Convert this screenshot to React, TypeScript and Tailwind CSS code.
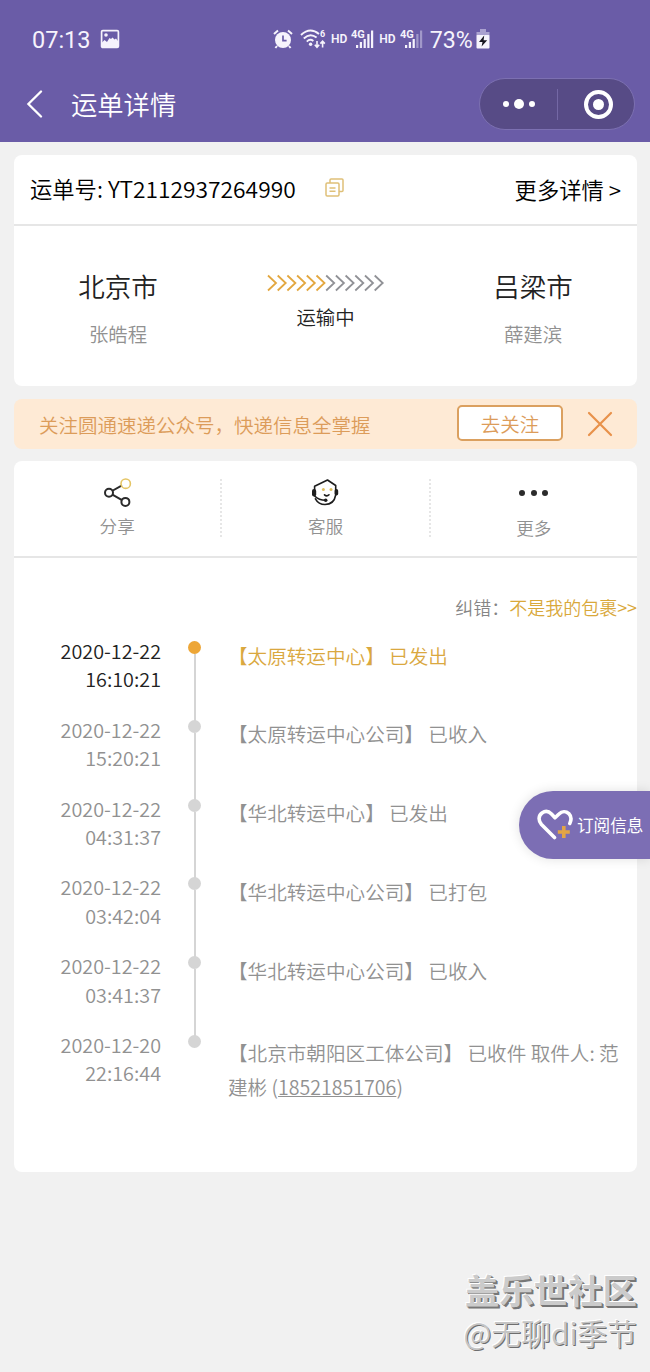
import clsx from "clsx";

const EVENTS = [
  { date: "2020-12-22", time: "16:10:21", text: "【太原转运中心】 已发出" },
  { date: "2020-12-22", time: "15:20:21", text: "【太原转运中心公司】 已收入" },
  { date: "2020-12-22", time: "04:31:37", text: "【华北转运中心】 已发出" },
  { date: "2020-12-22", time: "03:42:04", text: "【华北转运中心公司】 已打包" },
  { date: "2020-12-22", time: "03:41:37", text: "【华北转运中心公司】 已收入" },
  {
    date: "2020-12-20",
    time: "22:16:44",
    text: "【北京市朝阳区工体公司】 已收件 取件人: 范建彬 (",
    phone: "18521851706",
  },
];

const ARROWS = [0, 1, 2, 3, 4, 5, 6, 7, 8, 9, 10, 11];

function PictureIcon() {
  return (
    <svg width="20" height="20" viewBox="0 0 20 20" className="ml-[9px]">
      <rect x="1.6" y="1.6" width="16.8" height="16.8" rx="1.2" fill="none" stroke="#f6f3fc" strokeWidth="1.7" />
      <circle cx="6" cy="6" r="1.8" fill="#f6f3fc" />
      <path d="M2 13.5 L4.5 11 L7 13 L9.5 9 L11 10 L12.5 8.5 L14.5 10.5 L16 9.5 L18 12 V18 H2 Z" fill="#f6f3fc" />
    </svg>
  );
}

function AlarmIcon() {
  return (
    <svg width="20" height="20" viewBox="0 0 20 20">
      <path d="M1 5 L5 1.4 M19 5 L15 1.4 M4 17 L2.4 19 M16 17 L17.6 19" stroke="#f6f3fc" strokeWidth="2" />
      <circle cx="10" cy="11" r="8" fill="#f6f3fc" />
      <path d="M10 6.5 V11.6 H13.6" fill="none" stroke="#6a5ca7" strokeWidth="1.7" />
    </svg>
  );
}

function WifiIcon() {
  return (
    <svg width="26" height="20" viewBox="0 0 26 20" className="ml-[7px]">
      <g fill="none" stroke="#f6f3fc" strokeWidth="1.9">
        <path d="M1 6 Q10 -2.5 19 5" />
        <path d="M3.8 9.5 Q10 3.5 16.6 8.6" />
        <path d="M6.8 12.6 Q10 9.4 13.4 12" />
      </g>
      <circle cx="10.6" cy="15.2" r="1.7" fill="#f6f3fc" />
      <path d="M17 12 V18 M14.8 15.8 L17 18.2 L19.2 15.8 M22.6 18.5 V12.5 M20.4 14.6 L22.6 12.2 L24.8 14.6" fill="none" stroke="#f6f3fc" strokeWidth="1.6" />
      <text x="20" y="7.8" fontSize="9" fontWeight="700" fontFamily="Roboto" fill="#f6f3fc">6</text>
    </svg>
  );
}

function Signal({ weak }: { weak?: boolean }) {
  return (
    <svg width="23" height="20" viewBox="0 0 23 20" className="ml-[4px]">
      <g fill="#f6f3fc">
        <rect x="5" y="16" width="2.2" height="3" />
        <rect x="8.8" y="13" width="2.2" height="6" />
        <rect x="12.6" y="10" width="2.2" height="9" />
        <rect x="16.3" y="5" width="2.2" height="14" opacity={weak ? 0.4 : 1} />
        <rect x="20" y="1.5" width="2.2" height="17.5" opacity={weak ? 0.4 : 1} />
      </g>
      <text x="0" y="8.8" fontSize="11" fontWeight="700" fontFamily="Roboto" fill="#f6f3fc" stroke="#6a5ca7" strokeWidth="1.4" paintOrder="stroke">4G</text>
    </svg>
  );
}

function BatteryIcon() {
  return (
    <svg width="14" height="20" viewBox="0 0 14 20" className="ml-[3px]">
      <path d="M4 0 H10 V3 H13.5 V7 H0.5 V3 H4 Z" fill="#aaa1d0" />
      <rect x="0.5" y="6" width="13" height="13.5" rx="1" fill="#f6f3fc" />
      <path d="M8.2 6.6 L3 13 H6.5 L5.6 17.6 L11.2 11.2 H7.6 Z" fill="#17151f" />
    </svg>
  );
}

function StatusBar() {
  return (
    <div className="flex h-[78px] items-center pl-[32px] font-['Roboto'] text-[#f6f3fc]">
      <span className="w-[59px] pt-[2px] text-[23.5px] leading-7">07:13</span>
      <PictureIcon />
      <div className="ml-[153px] flex items-center">
        <AlarmIcon />
        <WifiIcon />
        <span className="ml-[5px] text-[12px] font-semibold">HD</span>
        <Signal />
        <span className="ml-[5px] text-[12px] font-semibold">HD</span>
        <Signal weak />
        <span className="ml-[7px] pt-[2px] text-[23.2px] leading-7">73%</span>
        <BatteryIcon />
      </div>
    </div>
  );
}

function NavBar() {
  return (
    <div className="flex h-[52px] items-center pr-[15px] pl-[26px]">
      <svg width="17" height="28" viewBox="0 0 17 28">
        <path d="M15 1.5 L2.4 14 L15 26.5" fill="none" stroke="#fff" strokeWidth="2.3" strokeLinecap="round" />
      </svg>
      <h1 className="ml-[28px] text-[26.3px] leading-9 font-[350] text-white">运单详情</h1>
      <div className="ml-auto flex h-[52px] w-[156px] items-center rounded-full border border-[#7c70b1] bg-[#574b86]">
        <div className="flex w-[77px] items-center justify-center gap-[5px]">
          <i className="size-[6px] rounded-full bg-white" />
          <i className="size-[10px] rounded-full bg-white" />
          <i className="size-[6px] rounded-full bg-white" />
        </div>
        <div className="h-[31px] w-px bg-[#7468a5]" />
        <div className="flex flex-1 justify-center pl-[4px]">
          <div className="flex size-[29px] items-center justify-center rounded-full border-4 border-white">
            <i className="size-[11px] rounded-full bg-white" />
          </div>
        </div>
      </div>
    </div>
  );
}

function Place({ city, person }: { city: string; person: string }) {
  return (
    <div className="flex w-[208px] flex-col items-center pt-[41px]">
      <span className="text-[26.5px] leading-10 font-[350] text-[#222]">{city}</span>
      <span className="mt-[14px] text-[19.4px] leading-7 font-[350] text-[#919191]">{person}</span>
    </div>
  );
}

function WaybillCard() {
  return (
    <section className="h-[231px] rounded-lg bg-white">
      <div className="flex h-[71px] items-center border-b-2 border-[#e6e6e6] px-[16px] text-[22.3px] font-[350] text-black">
        <span>
          运单号: <span className="text-[22.8px]">YT2112937264990</span>
        </span>
        <svg width="19" height="19" viewBox="0 0 19 19" className="mb-[4px] ml-[29px]">
          <g fill="none" stroke="#dfc078" strokeWidth="1.5">
            <path d="M5 5 V2 Q5 1 6 1 H17 Q18 1 18 2 V12.5 Q18 13.5 17 13.5 H14" />
            <rect x="1" y="5" width="13" height="13" rx="1.2" />
            <path d="M4.5 10 H10.5 M4.5 13.3 H10.5" />
          </g>
        </svg>
        <span className="ml-auto">更多详情 &gt;</span>
      </div>
      <div className="-mt-px flex justify-between">
        <Place city="北京市" person="张皓程" />
        <div className="flex flex-col items-center pt-[49px]">
          <svg width="118" height="18" viewBox="0 0 118 18">
            {ARROWS.map((n) => (
              <path
                key={n}
                d="M1 1.5 L9 9 L1 16.5"
                transform={`translate(${n * 9.7} 0)`}
                fill="none"
                stroke={n < 6 ? "#e3a73f" : "#909196"}
                strokeWidth="1.8"
              />
            ))}
          </svg>
          <span className="mt-[11px] text-[19.4px] leading-7 font-[350] text-[#222]">运输中</span>
        </div>
        <Place city="吕梁市" person="薛建滨" />
      </div>
    </section>
  );
}

function FollowBanner() {
  return (
    <section className="mt-[13px] flex h-[50px] items-center rounded-lg bg-[#feead5] pl-[25px] text-[19.5px] font-[350] text-[#dc9c5a]">
      <span className="w-[418px] pt-px">关注圆通速递公众号，快递信息全掌握</span>
      <button type="button" className="mb-[3px] h-[36px] w-[106px] rounded-[5px] border-2 border-[#dba05f] bg-white pt-[2px] leading-none">
        去关注
      </button>
      <svg width="26" height="26" viewBox="0 0 26 26" className="ml-[24px]">
        <path d="M2 2 L24 24 M24 2 L2 24" stroke="#e8914a" strokeWidth="2.2" strokeLinecap="round" />
      </svg>
    </section>
  );
}

function ActionBar() {
  return (
    <div className="flex h-[97px] items-center border-b-2 border-[#e6e6e6] text-[17.6px] leading-6 font-[350] text-[#919191]">
      <div className="flex flex-1 flex-col items-center gap-[7px] pb-[3px]">
        <svg width="30" height="30" viewBox="0 0 30 30" className="ml-px">
          <g fill="none" strokeWidth="2">
            <path d="M9 14 L19 8.3 M9 17.4 L19 23.2" stroke="#2b2b2b" />
            <circle cx="6" cy="15.7" r="4" stroke="#2b2b2b" />
            <circle cx="22.4" cy="24.9" r="4" stroke="#2b2b2b" />
            <circle cx="22.7" cy="6.7" r="4.7" stroke="#e5c565" strokeWidth="1.6" />
          </g>
        </svg>
        <span>分享</span>
      </div>
      <div className="mb-[2px] h-[58px] border-l-2 border-dotted border-[#e6e6e6]" />
      <div className="flex flex-1 flex-col items-center gap-[7px] pb-[3px]">
        <svg width="30" height="30" viewBox="0 0 30 30">
          <g fill="none" stroke="#1d1d1d" strokeWidth="1.6" strokeLinecap="round" strokeLinejoin="round">
            <path d="M4.6 12.5 V9.3 L17.5 3 L25.7 8.5 V18 Q24 27.5 15 27.5 Q8.5 27.5 5.4 21.8" />
            <path d="M4.6 19 Q9 23.3 15.5 23.3" />
            <path d="M14.5 17.8 Q16.8 20 19 17.8" />
          </g>
          <rect x="2" y="12" width="4.2" height="7.5" rx="2" fill="#1d1d1d" />
          <rect x="24.6" y="12" width="3.6" height="6.5" rx="1.8" fill="#1d1d1d" />
          <circle cx="15.7" cy="23.2" r="1.8" fill="#1d1d1d" />
          <circle cx="13.4" cy="12.5" r="1.5" fill="#dfbf5f" />
          <circle cx="21" cy="12.5" r="1.5" fill="#dfbf5f" />
        </svg>
        <span>客服</span>
      </div>
      <div className="mb-[2px] h-[58px] border-l-2 border-dotted border-[#e6e6e6]" />
      <div className="flex flex-1 flex-col items-center gap-[10px] pt-[2px]">
        <div className="flex h-[26px] items-center gap-[5.5px]">
          <i className="size-[6px] rounded-full bg-[#2b2b2b]" />
          <i className="size-[6px] rounded-full bg-[#2b2b2b]" />
          <i className="size-[6px] rounded-full bg-[#2b2b2b]" />
        </div>
        <span>更多</span>
      </div>
    </div>
  );
}

function Timeline() {
  return (
    <ul className="mt-[17px]">
      {EVENTS.map((event, index) => {
        const first = index === 0;
        const last = index === EVENTS.length - 1;
        return (
          <li key={event.time} className="flex h-[78.8px] text-[19.6px] font-[350]">
            <div className={clsx("-mt-px w-[147px] text-right text-[19.8px] leading-[28.4px]", first ? "text-[#222]" : "text-[#919191]")}>
              <div>{event.date}</div>
              <div>{event.time}</div>
            </div>
            <div className="ml-[27px] flex w-[13px] flex-col items-center pt-[3px]">
              <i className={clsx("size-[13px] shrink-0 rounded-full", first ? "bg-[#eda637]" : "bg-[#d5d5d5]")} />
              {!last && <div className="-mb-[4px] w-[2px] flex-1 bg-[#d5d5d5]" />}
            </div>
            <p
              className={clsx(
                "ml-[27px] w-[397px] leading-[34px]",
                first ? "text-[#daa83f]" : "text-[#919191]",
                last ? "pt-[4px]" : "pt-[0.5px]"
              )}
            >
              {event.text}
              {event.phone && (
                <>
                  <span className="underline">{event.phone}</span>)
                </>
              )}
            </p>
          </li>
        );
      })}
    </ul>
  );
}

function SubscribeButton() {
  return (
    <button
      type="button"
      className="absolute top-[791px] right-0 flex h-[68px] w-[131px] items-center rounded-l-full bg-[#7c6eb4] pl-[18px] text-white shadow-[0_0_12px_rgba(0,0,0,0.12)]"
    >
      <svg width="37" height="32" viewBox="0 0 37 32">
        <path
          d="M17.5 28.5 L4.5 15.5 C1 11.5 1.5 6.5 5 4 C8.5 1.5 12 2.5 14.5 5 L18 8.8 L22 5 C25 2 29 2 31.8 4.6 C34.6 7.5 34.5 11 32.8 14.5"
          fill="none"
          stroke="#fff"
          strokeWidth="3.6"
          strokeLinecap="round"
          strokeLinejoin="round"
        />
        <path d="M26.8 17 V29 M20.8 23 H32.8" stroke="#e3a545" strokeWidth="3.6" />
      </svg>
      <span className="ml-[3px] text-[16.6px] whitespace-nowrap">订阅信息</span>
    </button>
  );
}

export default function App() {
  return (
    <div className="relative h-[1372px] w-[650px] overflow-hidden bg-[#f1f1f1] font-['Noto_Sans_CJK_SC',sans-serif]">
      <header className="h-[142px] bg-[#6a5ca7]">
        <StatusBar />
        <NavBar />
      </header>

      <main className="mt-[13px] pr-[13px] pl-[14px]">
        <WaybillCard />
        <FollowBanner />
        <section className="mt-[12px] h-[711px] rounded-lg bg-white">
          <ActionBar />
          <div className="pt-[35px] text-right text-[18px] leading-7 font-[350] text-[#858585]">
            纠错：<span className="text-[#d9a83a]">不是我的包裹&gt;&gt;</span>
          </div>
          <Timeline />
        </section>
      </main>

      <SubscribeButton />

      <footer className="mt-[93px] flex flex-col items-end pr-[13px] whitespace-nowrap">
        <div className="text-[34.4px] leading-[48px] font-bold text-[#cbcbcb] [text-shadow:-1px_-1px_0_#fff,1px_1px_0_#777,2px_2px_0_#777]">
          盖乐世社区
        </div>
        <div className="-mt-[2px] text-[29.8px] leading-[42px] font-[350] text-[#c4c4c4] [text-shadow:-1px_-1px_0_#fff,1px_1px_0_#6e6e6e]">
          @无聊di季节
        </div>
      </footer>
    </div>
  );
}
